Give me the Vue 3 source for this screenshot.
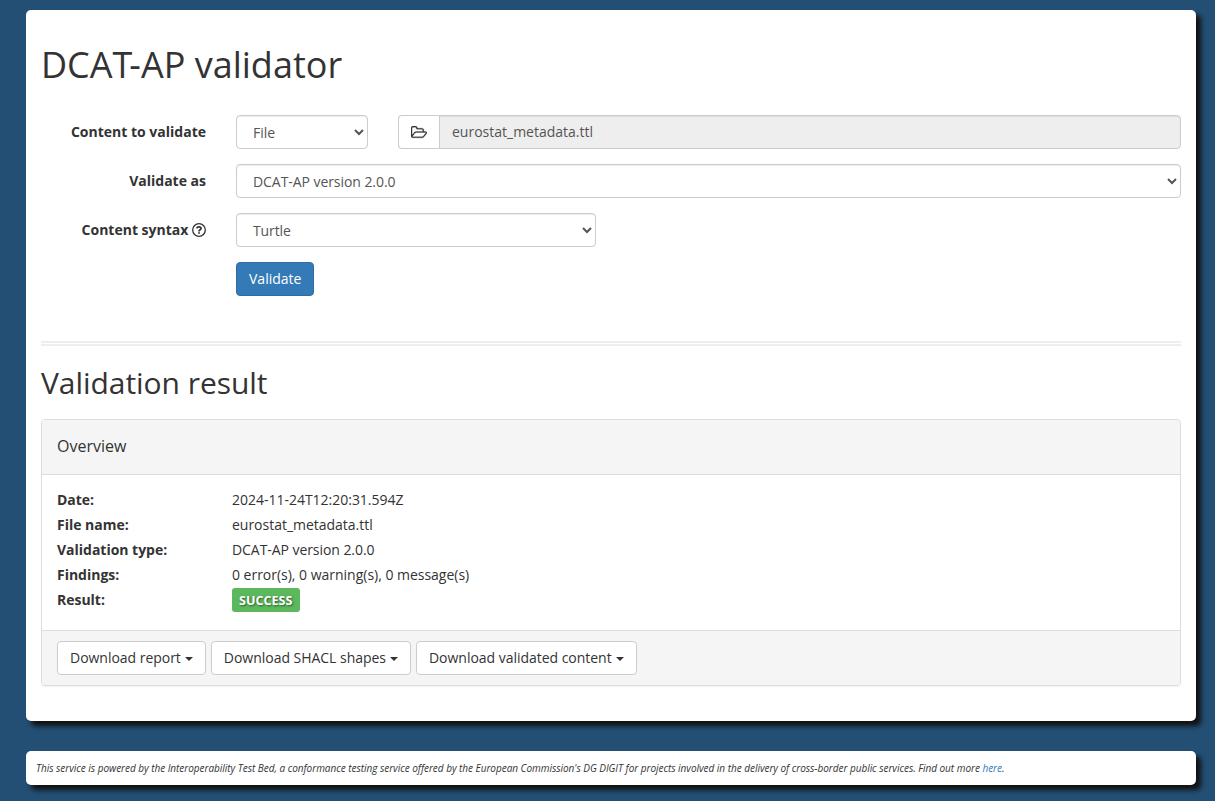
<script setup>
import { ref } from 'vue'
const rows = [
  ['Date:', '2024-11-24T12:20:31.594Z'],
  ['File name:', 'eurostat_metadata.ttl'],
  ['Validation type:', 'DCAT-AP version 2.0.0'],
  ['Findings:', '0 error(s), 0 warning(s), 0 message(s)'],
]
const downloads = ['Download report', 'Download SHACL shapes', 'Download validated content']
const kind = ref('File')
const version = ref('DCAT-AP version 2.0.0')
const syntax = ref('Turtle')
</script>

<template>
  <div class="page">
    <main class="card">
      <h1>DCA<span class="kern">T</span>-AP validator</h1>
      <div class="form">
        <div class="row">
          <label>Content to validate</label>
          <select v-model="kind" class="control kind"><option>File</option></select>
          <div class="file">
            <button class="browse" type="button">
              <svg width="16" height="13" viewBox="0 0 1920 1536"><path fill="#333" stroke="#333" stroke-width="35" d="M1781 803q0-35-53-35H640q-40 0-85.500 21.500T483 842l-294 363q-18 24-18 40 0 35 53 35h1088q40 0 86-22t71-53l294-363q18-22 18-39zM640 640h768V480q0-40-28-68t-68-28H736q-40 0-68-28t-28-68v-64q0-40-28-68t-68-28H224q-40 0-68 28t-28 68v853l256-315q44-53 116-87.500T640 640zm1269 163q0 62-46 120l-295 363q-43 53-116 87.500t-140 34.500H224q-92 0-158-66T0 1184V224Q0 132 66 66T224 0h320q92 0 158 66t66 158v32h544q92 0 158 66t66 158v160h192q54 0 99 24.500t67 70.500q15 32 15 68z"/></svg>
            </button>
            <div class="filename">eurostat_metadata.ttl</div>
          </div>
        </div>
        <div class="row">
          <label>Validate as</label>
          <select v-model="version" class="control wide"><option>DCAT-AP version 2.0.0</option></select>
        </div>
        <div class="row">
          <label>Content syntax
            <svg class="help" width="14" height="14" viewBox="0 0 14 14"><circle cx="7" cy="7" r="6.300" fill="none" stroke="#333" stroke-width="1.300"/><path d="M4.700 5.400C5 4.200 6 3.800 7 3.800c1.200 0 2.100.7 2.100 1.700C9.100 6.800 7 6.800 7 8.400" fill="none" stroke="#333" stroke-width="1.700"/><path fill="#333" d="M6.100 9.200h1.800v1.600H6.100z"/></svg>
          </label>
          <select v-model="syntax" class="control syntax"><option>Turtle</option></select>
        </div>
        <button class="validate" type="button">Validate</button>
      </div>
      <div class="divider"></div>
      <h2>Validation result</h2>
      <section class="panel">
        <header>Overview</header>
        <div class="details">
          <div v-for="r in rows" :key="r[0]" class="detail"><b>{{ r[0] }}</b><span :class="{ version: r[0] === 'Validation type:' }">{{ r[1] }}</span></div>
          <div class="detail"><b>Result:</b><span class="success">SUCCESS</span></div>
        </div>
        <footer>
          <button v-for="d in downloads" :key="d" type="button" class="download">{{ d }}<i class="caret"></i></button>
        </footer>
      </section>
    </main>
    <div class="notice">This service is powered by the Interoperability Test Bed, a conformance testing service offered by the European Commission's DG DIGIT for projects involved in the delivery of cross-border public services. Find out more <a>here</a>.</div>
  </div>
</template>

<style>
body { background: #234f74; }
</style>
<style scoped>
* { box-sizing: border-box; }
.page { height: 801px; overflow: hidden; padding: 10px 19px 0 26px; background: #234f74; color: #333; font: 14px/20px "Open Sans", sans-serif; }
.card { height: 711px; background: #fff; border-radius: 5px; padding: 35px 15px 0; box-shadow: 5px 5px 5px #111; }
h1 { margin: 0; font-size: 36px; line-height: 40px; font-weight: 400; }
.kern { letter-spacing: -.085em; }
h2 { margin: 0; padding: 20px 0 1px; font-size: 30px; line-height: 33px; font-weight: 400; letter-spacing: -.05px; }
.form { margin-top: 30px; }
.row { display: flex; height: 34px; margin-bottom: 15px; }
label { width: 165px; margin-right: 30px; padding-top: 7px; text-align: right; font-weight: 700; }
.help { vertical-align: -2px; }
button, select { font: inherit; }
.control { height: 34px; padding: 6px 12px; background: #fff; border: 1px solid #ccc; border-radius: 4px; color: #555; box-shadow: inset 0 1px 1px rgba(0,0,0,.075); }
.kind { width: 132px; margin-right: 30px; }
.wide { flex: 1; letter-spacing: -.06px; }
.syntax { width: 360px; letter-spacing: -.1px; }
.file { display: flex; flex: 1; }
.browse { width: 41px; padding: 0; background: #fff; border: 1px solid #ccc; border-right: 0; border-radius: 4px 0 0 4px; display: flex; align-items: center; justify-content: center; }
.filename { flex: 1; padding: 6px 12px; border: 1px solid #ccc; border-radius: 0 4px 4px 0; color: #555; background: #eee; box-shadow: inset 0 1px 1px rgba(0,0,0,.075); }
.validate { display: block; height: 34px; margin-left: 195px; padding: 6px 12px; color: #fff; background: #337ab7; border: 1px solid #2e6da4; border-radius: 4px; }
.divider { height: 5px; margin-top: 45px; border: solid #eee; border-width: 2px 0; }
.panel { margin-top: 19px; height: 267px; border: 1px solid #ddd; border-radius: 4px; box-shadow: 0 1px 1px rgba(0,0,0,.05); overflow: hidden; }
header { height: 55px; padding: 16px 15px; font-size: 16px; background: #f5f5f5; border-bottom: 1px solid #ddd; }
.details { height: 155px; padding: 12px 15px; }
.detail { display: flex; height: 25px; line-height: 25px; letter-spacing: -.015px; }
.version { letter-spacing: -.06px; }
.detail b { width: 175px; }
.success { width: 68px; height: 24px; margin-top: 1px; padding: 0 7px; color: #fff; background: #5cb85c; border-radius: 3px; font-size: 12.600px; font-weight: 700; text-shadow: 1px 1px 2px rgba(0,0,0,.5); }
footer { height: 55px; padding: 10px 15px; display: flex; gap: 5px; background: #f5f5f5; border-top: 1px solid #ddd; }
.download { height: 34px; padding: 6px 12px; color: #333; background: #fff; border: 1px solid #ccc; border-radius: 4px; white-space: nowrap; letter-spacing: -.027px; }
.caret { display: inline-block; margin-left: 4px; vertical-align: middle; border-top: 4px solid #333; border-left: 4px solid transparent; border-right: 4px solid transparent; }
.notice { height: 34px; margin-top: 30px; padding: 7px 10px; background: #fff; border-radius: 5px; box-shadow: 5px 5px 5px #111; font-size: 10px; font-style: italic; white-space: nowrap; letter-spacing: -.028px; }
.notice a { color: #337ab7; }
</style>
